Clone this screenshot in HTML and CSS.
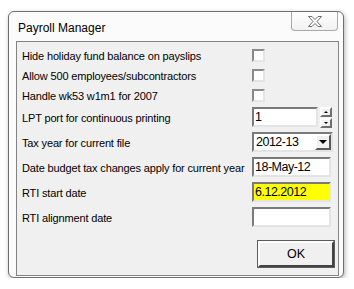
FILE: index.html
```html
<!DOCTYPE html>
<html lang="en">
<head>
    <meta charset="UTF-8">
    <title>Payroll Manager</title>
    <link rel="stylesheet" href="styles.css">
</head>
<body>

<div class="window">
    <!-- Title bar -->
    <div class="titlebar">
        <span class="title">Payroll Manager</span>
        <div class="close-btn">
            <svg width="14" height="11" viewBox="0 0 14 11">
                <polygon points="0.5,0.5 4,0.5 7,3.5 10,0.5 13.5,0.5 9,5.5 13.5,10.5 10,10.5 7,7.5 4,10.5 0.5,10.5 5,5.5" fill="#fafafa" stroke="#707070" stroke-width="1"/>
            </svg>
        </div>
    </div>

    <!-- Settings panel -->
    <div class="panel">
        <div class="row short">
            <label>Hide holiday fund balance on payslips</label>
            <span class="check"></span>
        </div>
        <div class="row short">
            <label>Allow 500 employees/subcontractors</label>
            <span class="check"></span>
        </div>
        <div class="row short">
            <label>Handle wk53 w1m1 for 2007</label>
            <span class="check"></span>
        </div>
        <div class="row">
            <label>LPT port for continuous printing</label>
            <div class="spin">
                <div class="field spin-field">1</div>
                <div class="spin-buttons">
                    <div class="spin-btn"><span class="tri-up"></span></div>
                    <div class="spin-btn"><span class="tri-down"></span></div>
                </div>
            </div>
        </div>
        <div class="row">
            <label>Tax year for current file</label>
            <div class="field combo">
                <span>2012-13</span>
                <div class="combo-btn"><span class="tri-down big"></span></div>
            </div>
        </div>
        <div class="row">
            <label>Date budget tax changes apply for current year</label>
            <div class="field">18-May-12</div>
        </div>
        <div class="row">
            <label>RTI start date</label>
            <div class="field highlight">6.12.2012</div>
        </div>
        <div class="row">
            <label>RTI alignment date</label>
            <div class="field"></div>
        </div>

        <div class="actions">
            <button class="ok-btn">OK</button>
        </div>
    </div>
</div>

</body>
</html>
```

FILE: styles.css
```css
body {
    margin: 0;
    background-color: white;
    font-family: "Liberation Sans", Arial, sans-serif;
}
.window {
    width: 334px;
    height: 265px;
    margin: 11px 0 0 8px;
    border: 1px solid #6f6f6f;
    border-radius: 6px;
    background-color: #fbfbfb;
    box-shadow: 1px 2px 5px rgba(0, 0, 0, 0.3);
    display: flex;
    flex-direction: column;
}
.titlebar {
    height: 29px;
    display: flex;
    justify-content: space-between;
    align-items: flex-start;
}
.title {
    font-size: 12px;
    margin: 9px 0 0 9px;
    color: black;
}
.close-btn {
    width: 45px;
    height: 18px;
    margin-right: 5px;
    border: 1px solid #a9a9a9;
    border-top: none;
    border-radius: 0 0 4px 4px;
    background: linear-gradient(#ffffff, #f1f1f1);
    display: flex;
    justify-content: center;
    align-items: center;
}
.panel {
    margin: 0 4px 0 7px;
    height: 230px;
    border: 1px solid #838383;
    background-color: #f0f0f0;
    padding: 3px 0 0 5px;
}
.row {
    height: 25px;
    display: flex;
    align-items: flex-start;
    font-size: 11px;
    letter-spacing: -0.15px;
}
.row.short {
    height: 20px;
    align-items: center;
}
.row label {
    width: 230px;
    flex-shrink: 0;
    white-space: nowrap;
    margin-top: 7px;
}
.row.short label {
    margin-top: 1px;
}
.check {
    width: 9px;
    height: 9px;
    background-color: white;
    border: 2px solid;
    border-color: #8a8a8a #e4e4e4 #e4e4e4 #8a8a8a;
}
.field {
    width: 74px;
    height: 16px;
    margin-top: 2px;
    background-color: white;
    border: 2px solid;
    border-color: #7a7a7a #e4e4e4 #e4e4e4 #7a7a7a;
    font-size: 12.5px;
    letter-spacing: -0.5px;
    line-height: 17px;
    padding-left: 1px;
}
.highlight {
    background-color: #ffff00;
}
.spin {
    display: flex;
    gap: 2px;
}
.spin-field {
    width: 61px;
}
.spin-buttons {
    margin-top: 2px;
    display: flex;
    flex-direction: column;
    gap: 1px;
}
.spin-btn {
    width: 8px;
    height: 6px;
    background-color: #f0f0f0;
    border: 2px solid;
    border-color: #ffffff #6e6e6e #6e6e6e #ffffff;
    display: flex;
    justify-content: center;
    align-items: center;
}
.tri-up {
    border-left: 2px solid transparent;
    border-right: 2px solid transparent;
    border-bottom: 2px solid black;
}
.tri-down {
    border-left: 2px solid transparent;
    border-right: 2px solid transparent;
    border-top: 2px solid black;
}
.tri-down.big {
    border-left-width: 4px;
    border-right-width: 4px;
    border-top-width: 4px;
}
.combo {
    width: 75px;
    height: 16px;
    display: flex;
    justify-content: space-between;
    align-items: center;
    padding: 0 0 0 2px;
}
.combo span {
    line-height: 16px;
}
.combo-btn {
    width: 12px;
    height: 12px;
    background-color: #f0f0f0;
    border: 2px solid;
    border-color: #ffffff #5a5a5a #5a5a5a #ffffff;
    display: flex;
    justify-content: center;
    align-items: center;
}
.actions {
    display: flex;
    justify-content: flex-end;
    margin-top: 11px;
    padding-right: 4px;
}
.ok-btn {
    width: 76px;
    height: 26px;
    font-family: "Liberation Sans", Arial, sans-serif;
    font-size: 12.5px;
    color: black;
    background-color: #f0f0f0;
    border: 2px solid;
    border-color: #ffffff #424242 #424242 #ffffff;
    box-shadow: 0 0 0 1px #5a5a5a;
    padding: 0;
}
```
